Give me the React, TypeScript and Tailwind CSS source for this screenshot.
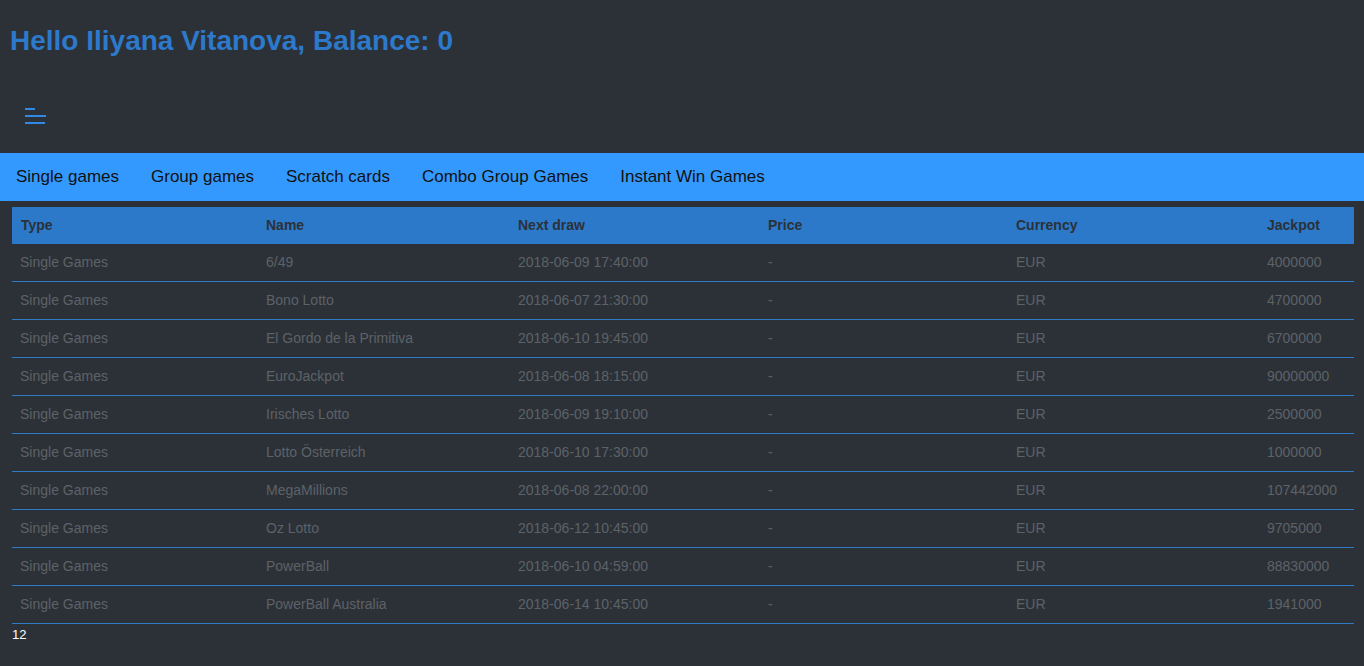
import React from "react";

const rows = [
  ["6/49", "2018-06-09 17:40:00", "4000000"],
  ["Bono Lotto", "2018-06-07 21:30:00", "4700000"],
  ["El Gordo de la Primitiva", "2018-06-10 19:45:00", "6700000"],
  ["EuroJackpot", "2018-06-08 18:15:00", "90000000"],
  ["Irisches Lotto", "2018-06-09 19:10:00", "2500000"],
  ["Lotto Österreich", "2018-06-10 17:30:00", "1000000"],
  ["MegaMillions", "2018-06-08 22:00:00", "107442000"],
  ["Oz Lotto", "2018-06-12 10:45:00", "9705000"],
  ["PowerBall", "2018-06-10 04:59:00", "88830000"],
  ["PowerBall Australia", "2018-06-14 10:45:00", "1941000"],
];

const tabs = ["Single games", "Group games", "Scratch cards", "Combo Group Games", "Instant Win Games"];

export default function App() {
  return (
    <div
      className="min-h-[666px] bg-[#2c3138] pb-4"
      style={{ fontFamily: '"Liberation Sans", Arial, sans-serif' }}
    >
      <h1 className="pl-[10px] pt-[25px] text-[28px] leading-[32px] font-bold text-[#2d79cb]">
        Hello Iliyana Vitanova, Balance: 0
      </h1>

      <div className="pl-[25px] pt-[48px] h-[96px]">
        <button className="flex flex-col gap-[5px] w-[22px] pt-[3px]">
          <span className="block h-[2px] w-[10px] bg-[#3189e6]" />
          <span className="block h-[2px] w-[21px] bg-[#3189e6]" />
          <span className="block h-[2px] w-[20px] bg-[#3189e6]" />
        </button>
      </div>

      <nav className="flex h-[48px] items-center bg-[#3399ff]">
        {tabs.map((tab) => (
          <a key={tab} className="px-4 text-[17px] text-[#111] cursor-pointer">
            {tab}
          </a>
        ))}
      </nav>

      <div className="pl-3 pr-[10px] pt-[6px]">
        <table className="w-full border-collapse text-[14px]">
          <thead>
            <tr className="bg-[#2b79c8] text-[#2c3138] h-[37px]">
              <th className="w-[246px] text-left font-bold pl-[9px]">Type</th>
              <th className="w-[252px] text-left font-bold pl-2">Name</th>
              <th className="w-[250px] text-left font-bold pl-2">Next draw</th>
              <th className="w-[248px] text-left font-bold pl-2">Price</th>
              <th className="w-[251px] text-left font-bold pl-2">Currency</th>
              <th className="text-left font-bold pl-2">Jackpot</th>
            </tr>
          </thead>
          <tbody>
            {rows.map(([name, draw, jackpot], i) => (
              <tr
                key={name}
                className={`${i === 0 ? "h-[37px]" : "h-[38px]"} border-b border-[#3079c4] text-[#5d6267]`}
              >
                <td className="pl-2">Single Games</td>
                <td className="pl-2">{name}</td>
                <td className="pl-2">{draw}</td>
                <td className="pl-2">-</td>
                <td className="pl-2">EUR</td>
                <td className="pl-2">{jackpot}</td>
              </tr>
            ))}
          </tbody>
        </table>
        <div className="pt-[1px] text-[13px] text-white">12</div>
      </div>
    </div>
  );
}
